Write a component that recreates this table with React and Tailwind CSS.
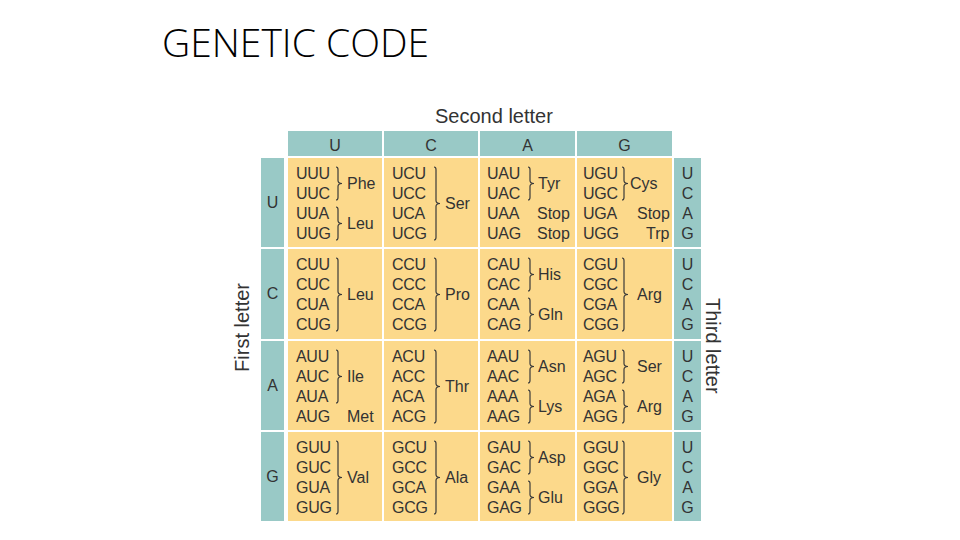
import React from "react";

// column layout: left padding, codon column width, default label margin
const COLS = [
  { pad: "pl-[8px]", cw: "w-[38px]", ml: "ml-[3px]" },
  { pad: "pl-[8px]", cw: "w-[40px]", ml: "ml-[3px]" },
  { pad: "pl-[7px]", cw: "w-[39px]", ml: "ml-[2px]" },
  { pad: "pl-[6px]", cw: "w-[37px]", ml: "ml-[7px]" },
];

const ROWS = [
  {
    first: "U",
    cells: [
      [
        { c: ["UUU", "UUC"], aa: "Phe" },
        { c: ["UUA", "UUG"], aa: "Leu" },
      ],
      [{ c: ["UCU", "UCC", "UCA", "UCG"], aa: "Ser" }],
      [
        { c: ["UAU", "UAC"], aa: "Tyr" },
        { c: ["UAA"], aa: "Stop", nb: true, lm: "ml-[1px]" },
        { c: ["UAG"], aa: "Stop", nb: true, lm: "ml-[1px]" },
      ],
      [
        { c: ["UGU", "UGC"], aa: "Cys", lm: "ml-0" },
        { c: ["UGA"], aa: "Stop", nb: true },
        { c: ["UGG"], aa: "Trp", nb: true, lm: "ml-[16px]" },
      ],
    ],
  },
  {
    first: "C",
    cells: [
      [{ c: ["CUU", "CUC", "CUA", "CUG"], aa: "Leu" }],
      [{ c: ["CCU", "CCC", "CCA", "CCG"], aa: "Pro" }],
      [
        { c: ["CAU", "CAC"], aa: "His" },
        { c: ["CAA", "CAG"], aa: "Gln" },
      ],
      [{ c: ["CGU", "CGC", "CGA", "CGG"], aa: "Arg" }],
    ],
  },
  {
    first: "A",
    cells: [
      [
        { c: ["AUU", "AUC", "AUA"], aa: "Ile" },
        { c: ["AUG"], aa: "Met", nb: true },
      ],
      [{ c: ["ACU", "ACC", "ACA", "ACG"], aa: "Thr" }],
      [
        { c: ["AAU", "AAC"], aa: "Asn" },
        { c: ["AAA", "AAG"], aa: "Lys" },
      ],
      [
        { c: ["AGU", "AGC"], aa: "Ser" },
        { c: ["AGA", "AGG"], aa: "Arg" },
      ],
    ],
  },
  {
    first: "G",
    cells: [
      [{ c: ["GUU", "GUC", "GUA", "GUG"], aa: "Val" }],
      [{ c: ["GCU", "GCC", "GCA", "GCG"], aa: "Ala" }],
      [
        { c: ["GAU", "GAC"], aa: "Asp" },
        { c: ["GAA", "GAG"], aa: "Glu" },
      ],
      [{ c: ["GGU", "GGC", "GGA", "GGG"], aa: "Gly" }],
    ],
  },
];

const Brace = ({ n }) => {
  const h = n * 20;
  const top = 3;
  const bot = h - 4;
  const mid = (top + bot) / 2;
  return (
    <svg width="10" height={h} className="shrink-0">
      <path
        d={`M2 ${top} Q4 ${top} 4 ${top + 2.5} L4 ${mid - 3} Q4 ${mid} 8 ${mid} Q4 ${mid} 4 ${mid + 3} L4 ${bot - 2.5} Q4 ${bot} 2 ${bot}`}
        fill="none"
        stroke="#3a3a3a"
        strokeWidth="1.2"
      />
    </svg>
  );
};

const Cell = ({ groups, col }) => (
  <div className={`bg-[#fcd98b] pt-[6px] ${col.pad}`}>
    {groups.map((g, i) => (
      <div key={i} className="flex items-center">
        <div className={`shrink-0 tracking-[-0.3px] ${col.cw}`}>
          {g.c.map((codon) => (
            <div key={codon} className="h-[20px] leading-[20px]">
              {codon}
            </div>
          ))}
        </div>
        {g.nb ? <div className="w-[10px] shrink-0" /> : <Brace n={g.c.length} />}
        <div className={`leading-[20px] ${g.lm || col.ml}`}>{g.aa}</div>
      </div>
    ))}
  </div>
);

export default function App() {
  return (
    <div className="w-[960px] h-[540px] bg-white overflow-hidden font-['Liberation_Sans',Arial,sans-serif] text-[#333]">
      <h1 className="ml-[162px] pt-[22px] text-[39px] leading-none font-light font-['Open_Sans',sans-serif] text-black">
        GENETIC CODE
      </h1>

      <div className="ml-[232px] mt-[45px]">
        <p className="ml-[203px] text-[20px] leading-[20px]">Second letter</p>

        <div className="mt-[5px] flex items-start">
          {/* First letter */}
          <div className="mt-[27px] mr-[9px] flex h-[363px] w-[20px] items-center justify-center pb-[25px]">
            <span className="rotate-180 text-[20px] leading-[20px] [writing-mode:vertical-rl]">
              First letter
            </span>
          </div>

          <div className="grid grid-cols-[25px_94px_94px_95px_95px_27px] grid-rows-[25px_89px_90px_89px_89px] gap-[2px] text-[16px]">
            <div />
            {["U", "C", "A", "G"].map((l) => (
              <div
                key={l}
                className="bg-[#99c9c6] pt-[2px] text-center leading-[25px]"
              >
                {l}
              </div>
            ))}
            <div />

            {ROWS.map((row) => (
              <React.Fragment key={row.first}>
                <div className="flex w-[23px] items-center justify-center bg-[#99c9c6]">
                  {row.first}
                </div>
                {row.cells.map((groups, ci) => (
                  <Cell key={ci} groups={groups} col={COLS[ci]} />
                ))}
                <div className="bg-[#99c9c6] pt-[6px] text-center">
                  {["U", "C", "A", "G"].map((l) => (
                    <div key={l} className="leading-[20px]">
                      {l}
                    </div>
                  ))}
                </div>
              </React.Fragment>
            ))}
          </div>

          {/* Third letter */}
          <div className="mt-[27px] ml-[2px] flex h-[363px] w-[20px] items-center justify-center pt-[13px]">
            <span className="text-[20px] leading-[20px] [writing-mode:vertical-rl]">
              Third letter
            </span>
          </div>
        </div>
      </div>
    </div>
  );
}
